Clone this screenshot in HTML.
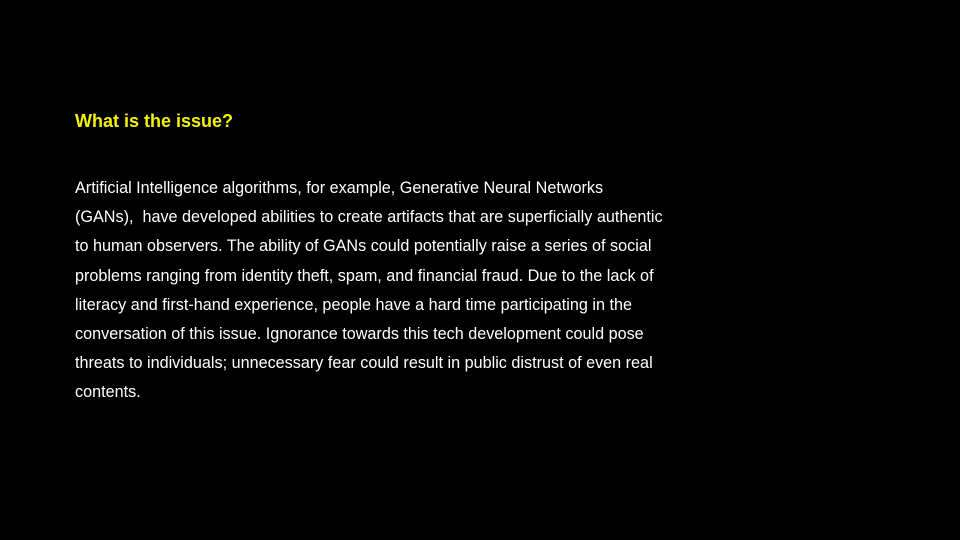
<!DOCTYPE html>
<html><head><meta charset="utf-8"><style>
html,body{margin:0;padding:0;background:#000;width:960px;height:540px;overflow:hidden}
.h{position:absolute;left:75px;top:111px;color:#f2f20a;font:bold 18px "Liberation Sans",sans-serif}
.b{position:absolute;left:75px;top:174px;color:#fff;font:16.2px/29.2px "Liberation Sans",sans-serif;white-space:nowrap}
</style></head><body>
<div class="h">What is the issue?</div>
<div class="b">Artificial Intelligence algorithms, for example, Generative Neural Networks<br>(GANs),&nbsp; have developed abilities to create artifacts that are superficially authentic<br>to human observers. The ability of GANs could potentially raise a series of social<br>problems ranging from identity theft, spam, and financial fraud. Due to the lack of<br>literacy and first-hand experience, people have a hard time participating in the<br>conversation of this issue. Ignorance towards this tech development could pose<br>threats to individuals; unnecessary fear could result in public distrust of even real<br>contents.</div>
</body></html>
